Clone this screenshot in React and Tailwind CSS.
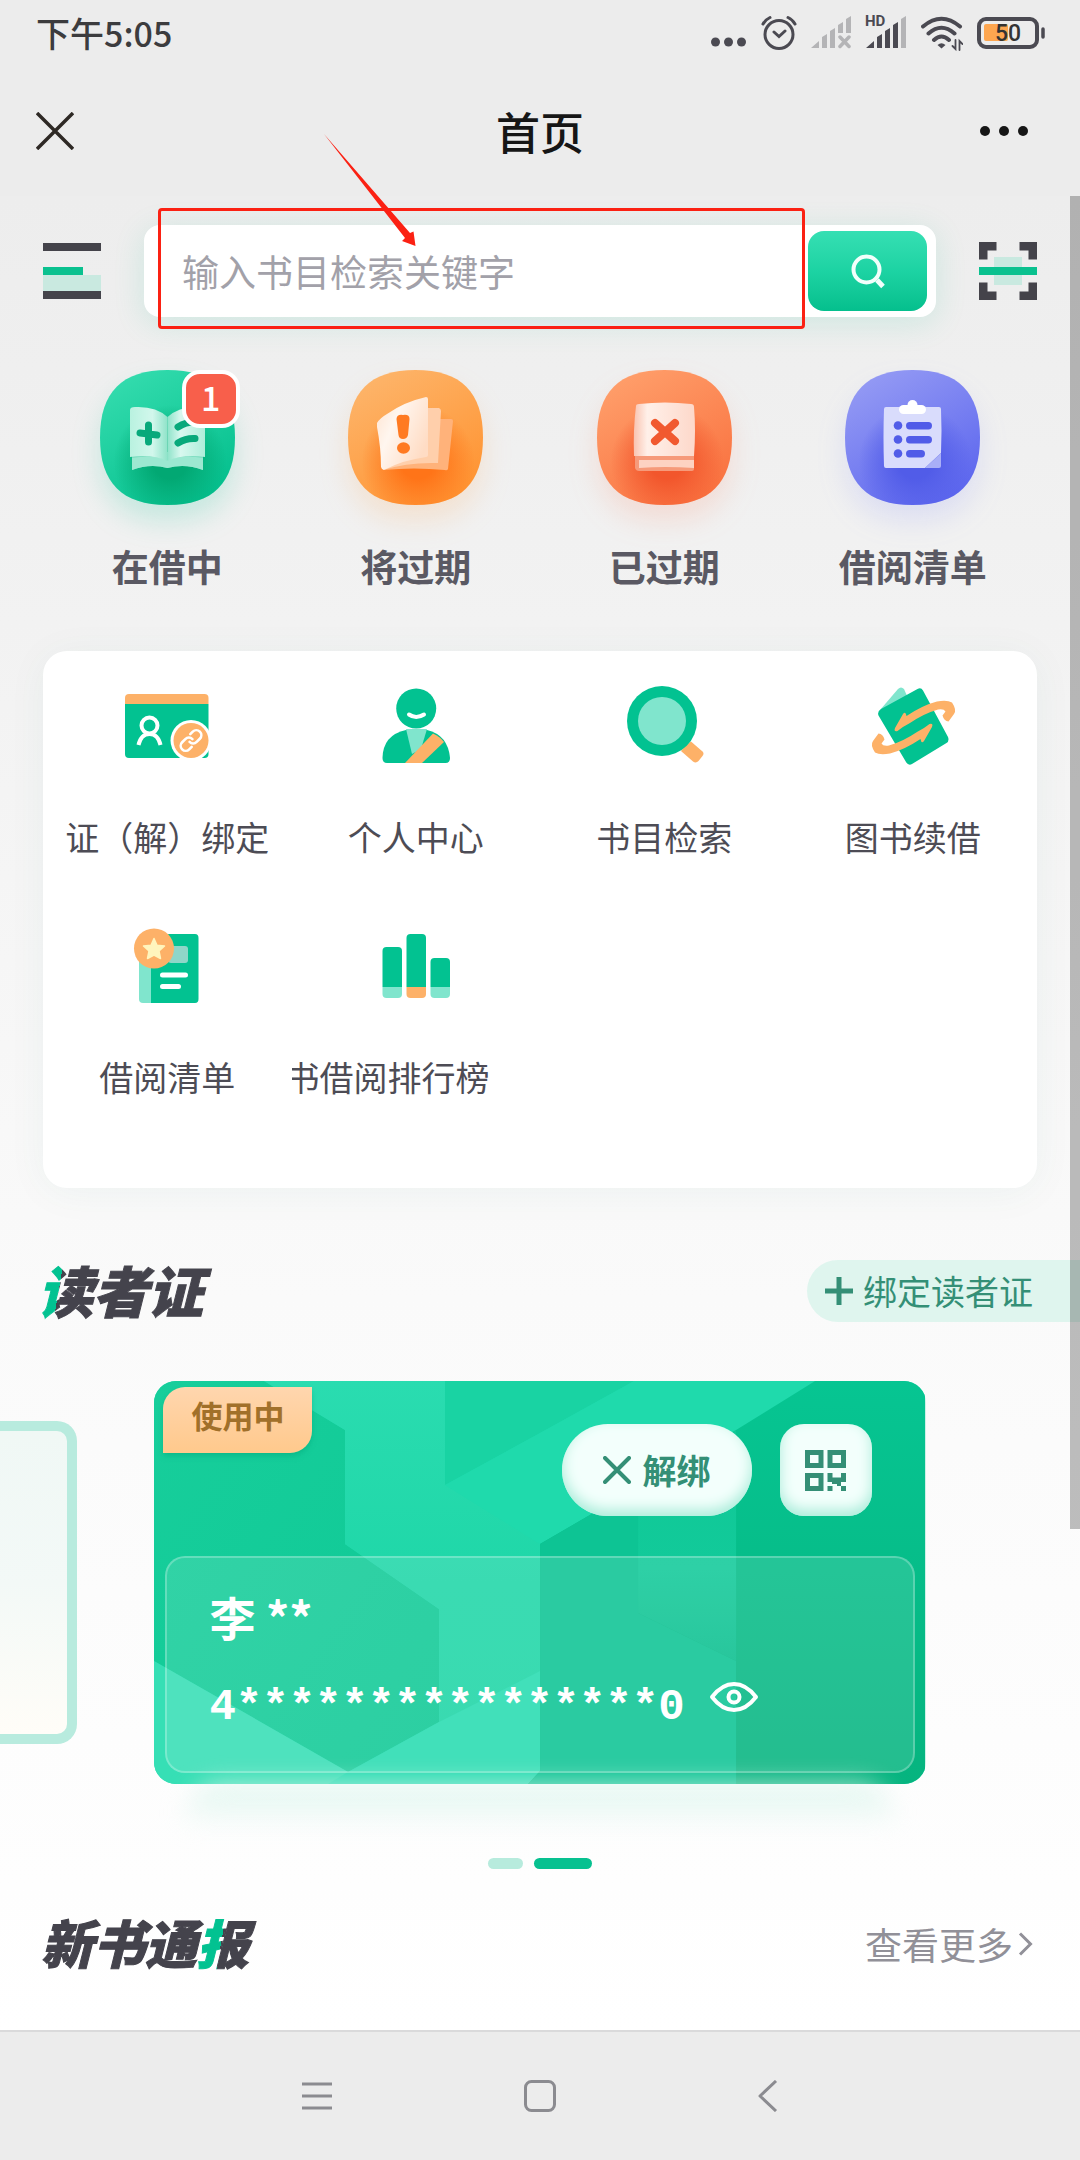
const SQUIRCLE =
  'M67.5 0C113 0 135 22 135 67.5S113 135 67.5 135 0 113 0 67.5 22 0 67.5 0Z';

function QuickBase({ id, from, to, glow, className, children }) {
  return (
    <svg viewBox="0 0 135 135" className={`block h-[135px] w-[135px] overflow-visible ${className}`} aria-hidden="true">
      <defs>
        <linearGradient id={`${id}-bg`} x1="0.2" y1="0" x2="0.8" y2="1">
          <stop offset="0" stopColor={from} />
          <stop offset="1" stopColor={to} />
        </linearGradient>
        <radialGradient id={`${id}-glow`} cx="0.52" cy="0.68" r="0.42">
          <stop offset="0.3" stopColor={glow} />
          <stop offset="1" stopColor={glow} stopOpacity="0" />
        </radialGradient>
      </defs>
      <path d={SQUIRCLE} fill={`url(#${id}-bg)`} />
      <path d={SQUIRCLE} fill={`url(#${id}-glow)`} />
      {children}
    </svg>
  );
}

function BorrowingIcon() {
  return (
    <QuickBase id="borrowing" from="#34dcae" to="#02be8c" glow="#02a873" className="drop-shadow-[0_16px_14px_rgba(2,193,144,0.18)]">
      <defs>
        <linearGradient id="page-l" x1="0" x2="1">
          <stop offset="0" stopColor="#b9f2e0" />
          <stop offset="0.6" stopColor="#d2f7ec" />
          <stop offset="1" stopColor="#8fe3c9" />
        </linearGradient>
        <linearGradient id="page-r" x1="0" x2="1">
          <stop offset="0" stopColor="#8fe3c9" />
          <stop offset="0.35" stopColor="#d8f8ef" />
          <stop offset="1" stopColor="#aeeeda" />
        </linearGradient>
      </defs>
      <path d="M32 82L32 100Q50 93 67.5 98Q85 93 103 100L103 82Z" fill="#7bdcbf" />
      <path d="M67.5 90Q52 84 32 88L32 100Q50 93 67.5 98Q85 93 103 100L103 88Q84 84 67.5 90Z" fill="#9ce8d1" />
      <path d="M30 40Q30 37 35 37Q56 36 67.5 47V91Q52 84 30 87Z" fill="url(#page-l)" />
      <path d="M105 40Q105 37 100 37Q79 36 67.5 47V91Q83 84 105 87Z" fill="url(#page-r)" />
      <g stroke="#08a97b" strokeWidth="7" strokeLinecap="round" fill="none">
        <path d="M48.500 55V72M40 63L57 65" />
        <path d="M78 57Q86 52 94 52M78 73Q86 68 95 68.500" />
      </g>
    </QuickBase>
  );
}

function DueSoonIcon() {
  return (
    <QuickBase id="due" from="#fdb56b" to="#ff922f" glow="#ff7418" className="drop-shadow-[0_16px_14px_rgba(255,165,80,0.2)]">
      <defs>
        <linearGradient id="due-page" x1="0" y1="0" x2="1" y2="0.6">
          <stop offset="0" stopColor="#ffe3cf" />
          <stop offset="0.4" stopColor="#fff6ef" />
          <stop offset="1" stopColor="#ffdcc4" />
        </linearGradient>
      </defs>
      <path d="M60 49H103Q105 49 105 51L100 99Q99 101 97 100Q66 97 35 100Z" fill="#ffb27a" />
      <path d="M60 38H91Q93 39 93 41L90 93Q60 92 35 100Z" fill="#ffcfab" />
      <path d="M29 53Q32 48 39 44Q56 32 78 27Q80 27 80 29V85Q80 87 78 87Q56 90 38 99Q34 101 33 97Q33 78 29 57Z" fill="url(#due-page)" />
      <path d="M48.500 49Q49 44 55 45Q61.500 44 61.500 49L60 65Q59 69 55 69Q51 69 50.500 65Z" fill="#ff7a22" />
      <ellipse cx="55.500" cy="78" rx="6.500" ry="5.800" fill="#ff7a22" />
    </QuickBase>
  );
}

function OverdueIcon() {
  return (
    <QuickBase id="overdue" from="#ff9f6b" to="#f9703e" glow="#f2562c" className="drop-shadow-[0_16px_14px_rgba(255,130,90,0.18)]">
      <defs>
        <linearGradient id="over-page" x1="0" x2="1">
          <stop offset="0" stopColor="#f9c3b0" />
          <stop offset="0.22" stopColor="#fff0e9" />
          <stop offset="1" stopColor="#fdd8ca" />
        </linearGradient>
      </defs>
      <path d="M38 84H97V99Q97 101 95 101H42Q39 101 38 98Z" fill="#f69a7a" />
      <path d="M42 90H97V98Q68 96 42 98Z" fill="#fdd2c2" />
      <path d="M39 36Q39 34 42 34Q68 31 94 34Q97 34 97 37Q99 60 97 86H37Q36 60 39 36Z" fill="url(#over-page)" />
      <path d="M58 53L78 71M78 53L58 71" stroke="#f1592f" strokeWidth="8" strokeLinecap="round" />
    </QuickBase>
  );
}

function LoanListIcon() {
  return (
    <QuickBase id="loans" from="#959bf4" to="#5a64ee" glow="#515ce8" className="drop-shadow-[0_16px_14px_rgba(110,120,255,0.15)]">
      <path d="M41 37H94Q96 37 96 39Q97 60 96 83L80 98H41Q39 98 39 96Q38 66 39 39Q39 37 41 37Z" fill="#d9dcfc" />
      <path d="M96 83V96Q96 98 94 98H80Z" fill="#a9aff7" />
      <rect x="54" y="35" width="27" height="9" rx="4.500" fill="#fff" />
      <circle cx="67.500" cy="35" r="5" fill="#fff" />
      <g fill="#515ce8">
        <circle cx="53" cy="55.500" r="4.300" />
        <circle cx="53" cy="69.500" r="4.300" />
        <circle cx="53" cy="83.500" r="4.300" />
        <rect x="61" y="52" width="26" height="7.500" rx="3.700" />
        <rect x="61" y="66" width="26" height="7.500" rx="3.700" />
        <rect x="61" y="80" width="19" height="7.500" rx="3.700" />
      </g>
    </QuickBase>
  );
}

function ServiceIcon({ children }) {
  return (
    <svg viewBox="0 0 90 90" className="block h-[90px] w-[90px]" aria-hidden="true">
      {children}
    </svg>
  );
}

function BindIcon() {
  return (
    <ServiceIcon>
      <path d="M3 24H86.500V74Q86.500 78 82.500 78H7Q3 78 3 74Z" fill="#02c291" />
      <path d="M3 24V18Q3 14 7 14H82.500Q86.500 14 86.500 18V24Z" fill="#fdb168" />
      <g fill="none" stroke="#fff" strokeWidth="4">
        <circle cx="27.500" cy="45.500" r="8" />
        <path d="M16.500 65Q19 54 27.500 54T38.500 65" />
      </g>
      <circle cx="69" cy="60.500" r="20.500" fill="#fff" />
      <circle cx="69" cy="60.500" r="17.500" fill="#fdb168" />
      <g transform="rotate(-45 69 60.500)" fill="none" stroke="#fff" strokeWidth="2.600" strokeLinecap="round">
        <path d="M66 65.500H62.500A5 5 0 0 1 62.500 55.500H67A5 5 0 0 1 72 60.500" transform="translate(-1 0)" />
        <path d="M72 55.500H75.500A5 5 0 0 1 75.500 65.500H71A5 5 0 0 1 66 60.500" transform="translate(1 0)" />
      </g>
    </ServiceIcon>
  );
}

function PersonIcon() {
  return (
    <ServiceIcon>
      <path d="M35 50Q12 55 11.500 78Q11.500 83 16 83H74.500Q79 83 79 78Q77 55 56 50Z" fill="#02c291" />
      <path d="M35 49H56L50 69L41 74Z" fill="#80e5cd" />
      <path d="M62 53.500Q69 56.500 73 62L51 83H34Z" fill="#fdb168" />
      <circle cx="45.200" cy="28.500" r="20" fill="#02c291" />
      <path d="M38 34.500Q45 39.500 53 34.500" fill="none" stroke="#fff" strokeWidth="4" strokeLinecap="round" />
    </ServiceIcon>
  );
}

function CatalogIcon() {
  return (
    <ServiceIcon>
      <path d="M67 65L72 61.500L83.500 71.500Q85.500 73.500 83.500 76L79.500 81Q77 83.500 74 81.500L62 71Z" fill="#fdb168" />
      <circle cx="43" cy="41" r="35" fill="#02c291" />
      <circle cx="43" cy="41" r="24" fill="#80e5cd" />
    </ServiceIcon>
  );
}

function RenewIcon() {
  const arrow =
    'M27 48L35 34Q37.500 30.500 38.500 36Q55 25 69 21.500Q79 19.500 84 22.500Q89 30 86 34L80.500 41.500Q76 41 74.500 35.500L77.500 31.500Q76 28.500 70 29.500Q56 33.500 42 43Q35 46.500 29.500 51Q25.500 52 27 48Z';
  return (
    <ServiceIcon>
      <path d="M12 30L30 9Q33 6 36 9L40 18Z" fill="#80e5cd" />
      <path d="M13 29L49.500 9Q53 7 55 10.500L80 57Q81.500 61 78.500 63L44 84Q40.500 86 38 82L10.500 35.500Q9 31.500 13 29Z" fill="#02c291" />
      <path d={arrow} fill="#fdb168" />
      <path d={arrow} fill="#fdb168" transform="rotate(180 45.500 47.500)" />
    </ServiceIcon>
  );
}

function ListIcon() {
  return (
    <ServiceIcon>
      <path d="M29 14H73Q76.500 14 76.500 18V79Q76.500 83 73 83H29Z" fill="#02c291" />
      <path d="M29 20H17V79Q17 83 21 83H29Z" fill="#80e5cd" />
      <rect x="46" y="26" width="20" height="17" rx="3" fill="#8fd6c8" />
      <path d="M40.500 55H63.500M40.500 66.500H56.500" stroke="#fff" strokeWidth="5" strokeLinecap="round" />
      <circle cx="32" cy="28.500" r="20" fill="#fdb168" />
      <path
        d="M32 18.500L35 25.200L42.500 26L37 31L38.500 38.500L32 35L25.500 38.500L27 31L21.500 26L29 25.200Z"
        fill="#fff5bd"
        stroke="#fff5bd"
        strokeWidth="1.500"
        strokeLinejoin="round"
      />
    </ServiceIcon>
  );
}

function RankIcon() {
  return (
    <ServiceIcon>
      <path d="M11.500 67V31Q11.500 27 15.500 27H27Q31 27 31 31V67Z" fill="#02c291" />
      <path d="M35.500 67V18Q35.500 14 39.500 14H51Q55 14 55 18V67Z" fill="#02c291" />
      <path d="M59.500 67V42Q59.500 38 63.500 38H75Q79 38 79 42V67Z" fill="#02c291" />
      <path d="M11.500 67H31V74Q31 78 27 78H15.500Q11.500 78 11.500 74Z" fill="#80e5cd" />
      <path d="M35.500 67H55V74Q55 78 51 78H39.500Q35.500 78 35.500 74Z" fill="#fdb168" />
      <path d="M59.500 67H79V74Q79 78 75 78H63.500Q59.500 78 59.500 74Z" fill="#80e5cd" />
    </ServiceIcon>
  );
}

const quickLinks = [
  { label: '在借中', icon: <BorrowingIcon />, count: 1 },
  { label: '将过期', icon: <DueSoonIcon /> },
  { label: '已过期', icon: <OverdueIcon /> },
  { label: '借阅清单', icon: <LoanListIcon /> },
];

const services = [
  { label: '证（解）绑定', icon: <BindIcon /> },
  { label: '个人中心', icon: <PersonIcon /> },
  { label: '书目检索', icon: <CatalogIcon /> },
  { label: '图书续借', icon: <RenewIcon /> },
  { label: '借阅清单', icon: <ListIcon /> },
  { label: '书借阅排行榜', icon: <RankIcon />, overflow: true },
];

function StatusBar() {
  return (
    <div className="flex h-[68px] items-center justify-between pr-[35px] pb-[2px] pl-9">
      <span className="text-[34px] leading-[48px] font-medium text-[#3c3c3e]">下午5:05</span>
      <div className="flex items-center gap-[14px] text-[#4b4a52]" aria-hidden="true">
        <svg viewBox="0 0 36 36" className="h-9 w-9" fill="currentColor">
          <circle cx="4.500" cy="27" r="4.500" />
          <circle cx="17.500" cy="27" r="4.500" />
          <circle cx="30.500" cy="27" r="4.500" />
        </svg>
        <svg viewBox="0 0 36 36" className="h-9 w-9" fill="none" stroke="currentColor" strokeWidth="3" strokeLinecap="round">
          <circle cx="18" cy="19.500" r="14" />
          <path d="M13 17L18 21.500L24 16M2 9Q4.500 4.500 9 2.500M34 9Q31.500 4.500 27 2.500" />
        </svg>
        <svg viewBox="0 0 40 36" className="h-9 w-10 text-[#b4b4b6]" fill="currentColor">
          <path d="M0 33L8 26V33ZM11 22L16 19V33H11ZM19 16L24 13V33H19ZM27 10L32 7V18H27ZM35 4L40 1V18H35Z" />
          <path d="M29 22L38 31.500M38 22L29 31.500" stroke="currentColor" strokeWidth="3.500" strokeLinecap="round" />
        </svg>
        <svg viewBox="0 0 42 36" className="h-9 w-[42px] overflow-visible" fill="currentColor">
          <text x="0" y="11" fontSize="15" fontWeight="700" fontFamily="Roboto, sans-serif">HD</text>
          <path d="M1 33L9 26V33ZM12 22L17 19V33H12ZM20 16L25 13V33H20ZM28 10L33 7V33H28Z" />
          <path d="M36 4L41 1V33H36Z" fill="#b4b4b6" />
        </svg>
        <svg viewBox="0 0 42 36" className="h-9 w-[42px]" fill="none" stroke="currentColor" strokeWidth="4" strokeLinecap="round">
          <path d="M2 11.500Q20.500 -4 39 11.500M7.500 18.500Q20.500 7 33.500 18.500M13 25Q20.500 18 28 25" />
          <path d="M16.500 30Q20.500 26.500 24.500 30L20.500 33.500Z" fill="currentColor" stroke="none" />
          <path d="M34.500 25V34L31.500 31M38.500 35V26L41.500 29" strokeWidth="1.800" />
        </svg>
        <svg viewBox="0 0 68 36" className="h-9 w-[68px]">
          <rect x="2" y="4" width="58" height="28" rx="7" fill="none" stroke="currentColor" strokeWidth="4" />
          <rect x="7" y="9" width="24" height="17" rx="2" fill="#fda650" />
          <path d="M66 14V22" stroke="currentColor" strokeWidth="3.500" strokeLinecap="round" />
          <text x="31" y="26" textAnchor="middle" fontSize="23" fontWeight="500" fontFamily="Roboto, sans-serif" fill="#333">50</text>
        </svg>
      </div>
    </div>
  );
}

function TitleBar() {
  return (
    <div className="grid h-32 grid-cols-3 items-center px-9 pb-[2px]">
      <button type="button" aria-label="关闭" className="justify-self-start text-[#2e2925]">
        <svg viewBox="0 0 38 38" className="h-[38px] w-[38px]" stroke="currentColor" strokeWidth="3.500">
          <path d="M1 1L37 37M37 1L1 37" />
        </svg>
      </button>
      <h1 className="text-center text-[44px] leading-[60px] font-medium text-[#161616]">首页</h1>
      <button type="button" aria-label="更多" className="justify-self-end pr-4 text-[#161616]">
        <svg viewBox="0 0 48 10" className="h-[10px] w-12" fill="currentColor">
          <circle cx="5" cy="5" r="5" />
          <circle cx="24" cy="5" r="5" />
          <circle cx="43" cy="5" r="5" />
        </svg>
      </button>
    </div>
  );
}

function SearchRow() {
  return (
    <div className="flex items-center gap-[43px] px-[43px]">
      <button type="button" aria-label="菜单">
        <svg viewBox="0 0 58 56" className="h-14 w-[58px]">
          <path d="M0 0H58V8H0ZM0 48H58V56H0Z" fill="#44434a" />
          <path d="M0 32H58V48H0Z" fill="#c9e9e0" />
          <path d="M0 24H40V32H0Z" fill="#0ac18f" />
        </svg>
      </button>
      <form
        className="relative flex h-[92px] min-w-0 flex-1 items-center rounded-2xl bg-white pr-[9px] pl-[38px] shadow-[0_6px_32px_rgba(2,193,144,0.14)]"
        onSubmit={(e) => e.preventDefault()}
      >
        <input
          type="search"
          aria-label="书目检索"
          placeholder="输入书目检索关键字"
          className="h-[60px] min-w-0 flex-1 bg-transparent text-[37px] text-[#55545c] outline-none placeholder:text-[#a2a1a9]"
        />
        <button
          type="submit"
          aria-label="搜索"
          className="flex h-20 w-[119px] items-center justify-center rounded-2xl bg-linear-to-b from-[#35dfb3] via-[#1cd3a3] to-[#04bf8d]"
        >
          <svg viewBox="0 0 36 36" className="h-9 w-9" fill="none" stroke="#f2fffb" strokeWidth="4">
            <circle cx="16.500" cy="16.500" r="13" />
            <path d="M27 27L33 33.500" strokeWidth="5" />
          </svg>
        </button>
        <div className="pointer-events-none absolute -top-[17px] right-[131px] -bottom-[12px] left-[14px] rounded-sm border-3 border-[#fb2113]" />
        <svg viewBox="0 0 92 112" className="pointer-events-none absolute -top-[91px] left-[180px] h-28 w-[92px]" aria-hidden="true">
          <path d="M0 0L86 99L89.500 97.500L91.500 112L78 107L81 104Z" fill="#fb2113" />
        </svg>
      </form>
      <button type="button" aria-label="扫一扫">
        <svg viewBox="0 0 58 58" className="h-[58px] w-[58px]">
          <path d="M0 0H17.500V8.500H8.500V17.500H0ZM40.500 0H58V17.500H49.500V8.500H40.500ZM0 40.500H8.500V49.500H17.500V58H0ZM49.500 40.500H58V58H40.500V49.500H49.500Z" fill="#44434a" />
          <path d="M15 15H43V43H15Z" fill="#c9e9e0" />
          <path d="M0 25H58V33H0Z" fill="#0ac18f" />
        </svg>
      </button>
    </div>
  );
}

function QuickLinks() {
  return (
    <nav className="mt-[53px] grid grid-cols-4 px-[43px]">
      {quickLinks.map((item) => (
        <a key={item.label} href="#" className="flex flex-col items-center gap-[37px]">
          <span className="relative">
            {item.icon}
            {item.count && (
              <span className="absolute top-0 -right-[5px] flex h-[58px] w-[58px] items-center justify-center rounded-[18px] border-4 border-white bg-[#f85f4b] pb-1 text-[34px] leading-none font-medium text-white">
                {item.count}
              </span>
            )}
          </span>
          <span className="text-[37px] leading-[48px] font-bold text-[#5a5963]">{item.label}</span>
        </a>
      ))}
    </nav>
  );
}

function Services() {
  return (
    <section className="mx-[43px] mt-[61px] grid grid-cols-4 gap-y-[59px] rounded-3xl bg-white pt-[29px] pb-[87px] shadow-[0_4px_40px_rgba(2,120,90,0.05)]">
      {services.map((item, i) => (
        <a key={i} href="#" className="flex flex-col items-center gap-[43px] overflow-hidden">
          {item.icon}
          <span
            className={`text-[34px] leading-[48px] font-normal whitespace-nowrap text-[#4d4c55] ${
              item.overflow ? 'w-full -indent-[6px]' : ''
            }`}
          >
            {item.label}
          </span>
        </a>
      ))}
    </section>
  );
}

function CardPattern() {
  return (
    <svg viewBox="0 0 771 403" preserveAspectRatio="none" className="absolute inset-0 h-full w-full" aria-hidden="true">
      <defs>
        <linearGradient id="card-right" x1="0" y1="0" x2="0" y2="1">
          <stop offset="0" stopColor="#06c592" />
          <stop offset="1" stopColor="#06b47f" />
        </linearGradient>
        <linearGradient id="card-hex" x1="0" y1="0" x2="1" y2="1">
          <stop offset="0" stopColor="#17ce9b" />
          <stop offset="1" stopColor="#0fc996" />
        </linearGradient>
        <linearGradient id="card-mid" x1="0" y1="0" x2="0" y2="1">
          <stop offset="0" stopColor="#2adcb0" />
          <stop offset="0.5" stopColor="#1fd7a8" />
          <stop offset="1" stopColor="#1ed4a6" />
        </linearGradient>
        <linearGradient id="card-fold" x1="0" y1="0" x2="0" y2="1">
          <stop offset="0" stopColor="#0fc896" />
          <stop offset="0.6" stopColor="#12ca9a" />
          <stop offset="1" stopColor="#0bbf8f" />
        </linearGradient>
      </defs>
      <path d="M0 0H771V403H0Z" fill="#1fd9ad" />
      <path d="M0 0H110L191 49V163L285 228V341L194 391L0 280Z" fill="url(#card-hex)" />
      <path d="M110 0H291V104L386 163V403H194L285 341V228L191 163V49Z" fill="url(#card-mid)" />
      <path d="M0 280L194 391V403H0Z" fill="#36dfb5" />
      <path d="M194 391L285 341L386 290V403H174Z" fill="#27dcb1" />
      <path d="M291 0H480L386 52L291 104Z" fill="#19d3a3" />
      <path d="M386 52L480 0H661L582 49L386 163L291 104Z" fill="#1fdaac" />
      <path d="M661 0H771V403H374L386 390V163L582 49Z" fill="url(#card-right)" />
      <path d="M386 163L484 106V232L582 280V403H374L386 390Z" fill="#0dc494" />
      <path d="M484 106L582 49V280L484 232Z" fill="url(#card-fold)" />
    </svg>
  );
}

function ReaderCard() {
  return (
    <article className="relative w-[71.4%] overflow-hidden rounded-[22px]">
      <CardPattern />
      <span className="absolute top-[6px] left-[9px] flex h-[66px] w-[149px] items-start justify-center rounded-tl-[22px] rounded-br-[22px] bg-linear-to-b from-[#ffd6ae] to-[#ffc98c] pt-1 text-[31px] leading-[48px] font-bold text-[#a1702a] shadow-md shadow-[#06a87a]/40">
        使用中
      </span>
      <div className="relative flex justify-end gap-7 pt-[43px] pr-[54px]">
        <button
          type="button"
          className="flex h-[92px] w-[190px] items-center justify-center gap-3 rounded-full bg-[#f3fffc] text-[34px] leading-[48px] font-bold text-[#348f76] shadow-[inset_0_-6px_14px_#a9ecd9]"
        >
          <svg viewBox="0 0 28 28" className="h-7 w-7" stroke="currentColor" strokeWidth="4" strokeLinecap="round" aria-hidden="true">
            <path d="M2 2L26 26M26 2L2 26" />
          </svg>
          解绑
        </button>
        <button
          type="button"
          aria-label="二维码"
          className="flex h-[92px] w-[92px] items-center justify-center rounded-3xl bg-[#f3fffc] text-[#348f76] shadow-[inset_0_-6px_14px_#a9ecd9]"
        >
          <svg viewBox="0 0 41 41" className="h-[41px] w-[41px]">
            <g fill="none" stroke="currentColor" strokeWidth="5">
              <path d="M2.500 2.500H16V15.500H2.500ZM25 2.500H38.500V15.500H25ZM2.500 25.500H16V38.500H2.500Z" />
            </g>
            <path d="M22.500 23H27.500V27.500H36V23H41V32H36V36H32V34H27V32H22.500ZM22.500 36H27.500V41H22.500ZM36 36H41V41H36Z" fill="currentColor" />
          </svg>
        </button>
      </div>
      <div className="relative m-[11px] mt-10 rounded-[20px] border-2 border-white/25 bg-white/12 px-[42px] pt-7 pb-[34px] text-white">
        <p className="text-[46px] leading-[60px] font-bold">李 **</p>
        <p className="mt-[31px] flex items-center gap-6 font-['Liberation_Mono',monospace] text-[44px] leading-[60px] font-bold">
          4****************0
          <button type="button" aria-label="显示证号" className="-mt-5">
            <svg viewBox="0 0 50 30" className="h-[30px] w-[50px]" fill="none" stroke="currentColor" strokeWidth="4">
              <path d="M3 15Q13 2 25 2T47 15Q37 28 25 28T3 15Z" strokeLinejoin="round" />
              <circle cx="25" cy="15" r="5.500" />
            </svg>
          </button>
        </p>
      </div>
    </article>
  );
}

function ReaderCards() {
  return (
    <>
      <section className="mt-[70px] flex items-center justify-between pl-[38px]">
        <h2 className="bg-linear-100 from-[#02c291] from-14% to-[#44434c] to-14% bg-clip-text pr-3 pb-1 text-[55px] leading-[62px] font-black text-transparent italic [-webkit-text-stroke:1px_transparent]">
          读者证
        </h2>
        <button
          type="button"
          className="flex h-[62px] items-center gap-[10px] rounded-l-full bg-[#dff5ee] pr-[47px] pl-[18px] text-[34px] leading-[48px] text-[#348f76]"
        >
          <svg viewBox="0 0 28 28" className="h-7 w-7" stroke="currentColor" strokeWidth="5" aria-hidden="true">
            <path d="M14 0V28M0 14H28" />
          </svg>
          绑定读者证
        </button>
      </section>
      <section className="mt-[57px] flex items-center gap-[77px] overflow-x-clip">
        <div className="h-[323px] flex-1 rounded-r-[20px] border-y-[10px] border-r-[10px] border-[#b8ebde] bg-linear-to-b from-[#f0f8f5] via-[#f3f9f7] to-[#fffdf8]" />
        <ReaderCard />
        <div className="flex-1 border-r-[10px] border-transparent" />
      </section>
      <div className="mx-auto h-[74px] w-[66%] rounded-full bg-linear-to-b from-[#ddf6ee] to-transparent to-60% blur-md" />
      <div className="flex justify-center gap-[11px]">
        <span className="h-[11px] w-[35px] rounded-full bg-[#b7ebdd]" />
        <span className="h-[11px] w-[58px] rounded-full bg-[#07c190]" />
      </div>
    </>
  );
}

function NewBooks() {
  return (
    <section className="mt-[42px] flex items-center justify-between pr-[47px] pl-[41px]">
      <h2 className="pr-3 pb-1 text-[52px] leading-[62px] font-black text-[#44434c] italic [-webkit-text-stroke:1px_#44434c]">
        新书通
        <span className="bg-linear-100 from-[#02c291] from-40% to-[#44434c] to-40% bg-clip-text pr-3 text-transparent [-webkit-text-stroke:1px_transparent]">
          报
        </span>
      </h2>
      <a href="#" className="flex items-center gap-[5px] text-[37px] leading-[48px] text-[#919098]">
        查看更多
        <svg viewBox="0 0 15 24" className="h-6 w-[15px]" fill="none" stroke="currentColor" strokeWidth="3" aria-hidden="true">
          <path d="M2 1.500L12.500 12L2 22.500" />
        </svg>
      </a>
    </section>
  );
}

function SystemNav() {
  return (
    <footer className="flex h-[130px] items-center justify-center gap-[191px] border-t-2 border-[#dadadb] bg-[#ececec] text-[#8b8b90]">
      <button type="button" aria-label="最近任务">
        <svg viewBox="0 0 32 30" className="h-[30px] w-8" stroke="currentColor" strokeWidth="3">
          <path d="M1 3H31M1 15H31M1 27H31" />
        </svg>
      </button>
      <button type="button" aria-label="主屏幕">
        <svg viewBox="0 0 32 32" className="h-8 w-8" fill="none" stroke="currentColor" strokeWidth="3">
          <rect x="1.500" y="1.500" width="29" height="29" rx="6" />
        </svg>
      </button>
      <button type="button" aria-label="返回">
        <svg viewBox="0 0 32 32" className="h-8 w-8" fill="none" stroke="currentColor" strokeWidth="3" strokeLinejoin="round">
          <path d="M29 1L13 16L29 31" />
        </svg>
      </button>
    </footer>
  );
}

export default function App() {
  return (
    <div className="flex min-h-screen flex-col bg-[#ececec] font-['Noto_Sans_CJK_SC',sans-serif]">
      <header>
        <StatusBar />
        <TitleBar />
      </header>
      <main className="relative flex-1 bg-linear-to-b from-[#ededed] via-[#fafafa] via-60% to-white pt-[29px] pb-12">
        <SearchRow />
        <QuickLinks />
        <Services />
        <ReaderCards />
        <NewBooks />
        <div className="absolute top-0 right-0 h-[72.7%] w-[10px] bg-black/25" />
      </main>
      <SystemNav />
    </div>
  );
}
